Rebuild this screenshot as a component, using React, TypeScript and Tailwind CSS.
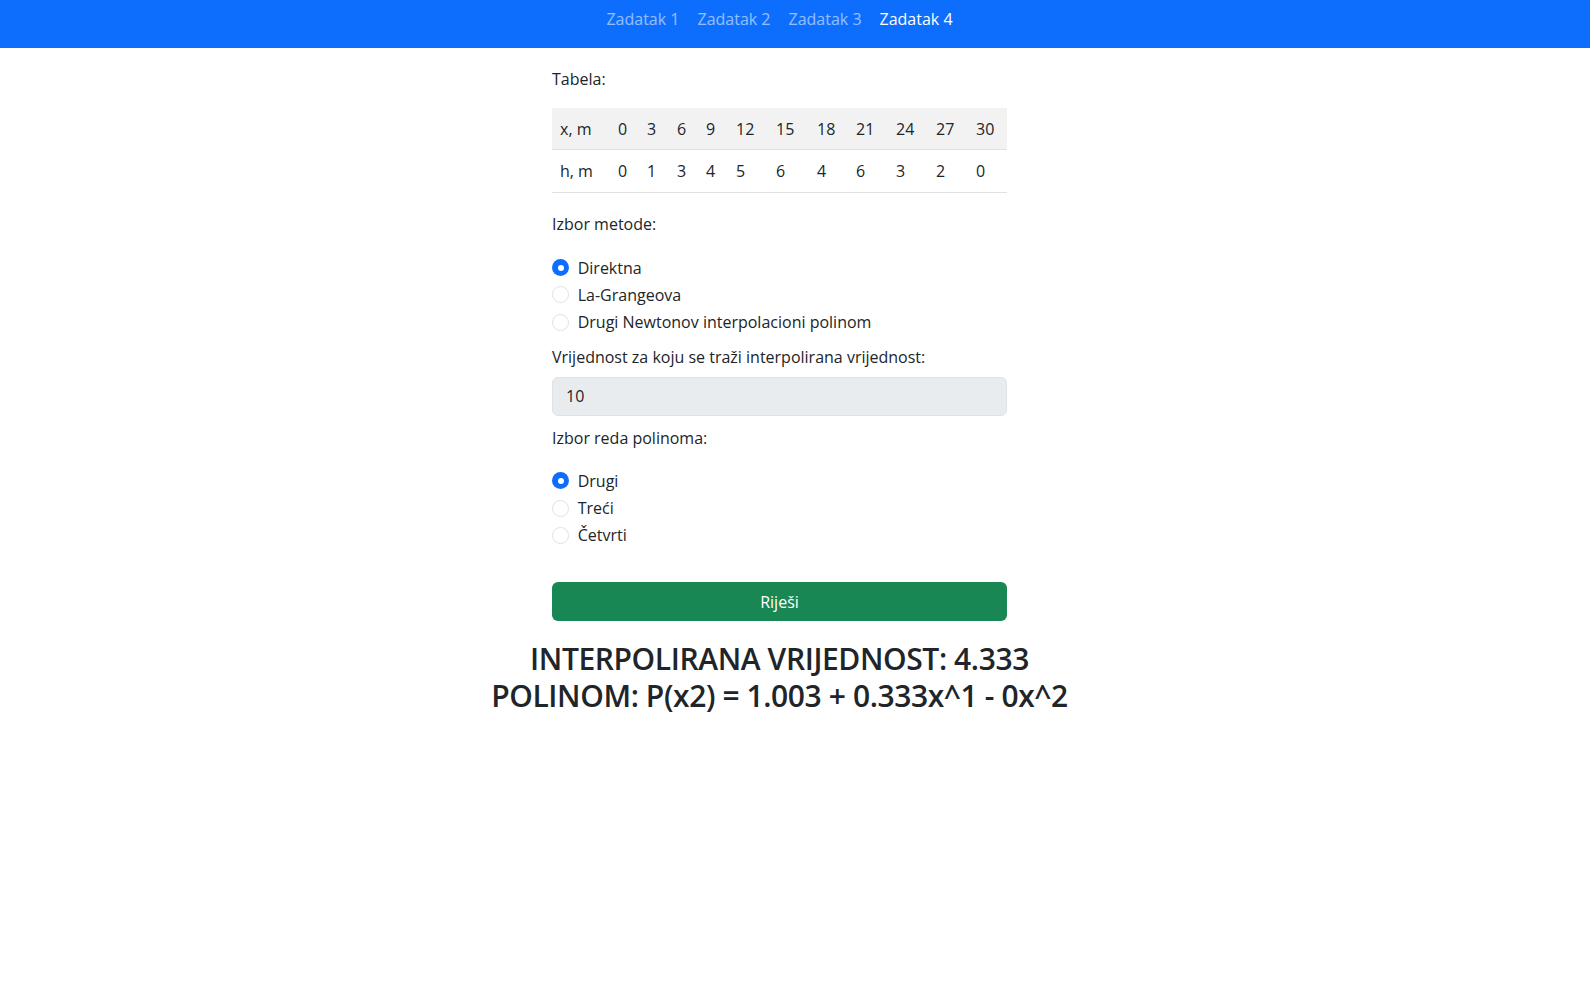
import { useState } from 'react';

const xs = ['0', '3', '6', '9', '12', '15', '18', '21', '24', '27', '30'];
const hs = ['0', '1', '3', '4', '5', '6', '4', '6', '3', '2', '0'];

const metode = ['Direktna', 'La-Grangeova', 'Drugi Newtonov interpolacioni polinom'];
const redovi = ['Drugi', 'Treći', 'Četvrti'];

// kolone tabele, sirine uzete sa slike
const gridCols = 'grid grid-cols-[58px_29px_30px_29px_30px_40px_41px_39px_40px_40px_40px_39px] items-center';

function Radio({ label, checked, onClick }: { label: string; checked: boolean; onClick: () => void }) {
  return (
    <div className="flex h-[27.3px] cursor-pointer items-center gap-[8.7px]" onClick={onClick}>
      {checked ? (
        <span className="flex h-[17px] w-[17px] items-center justify-center rounded-full bg-[#0d6efd]">
          <span className="h-[6px] w-[6px] rounded-full bg-white" />
        </span>
      ) : (
        <span className="h-[17px] w-[17px] rounded-full border border-[#dee2e6] bg-white" />
      )}
      <span>{label}</span>
    </div>
  );
}

export default function App() {
  const [metoda, setMetoda] = useState(0);
  const [red, setRed] = useState(0);

  return (
    <div className="min-h-screen bg-white text-[16px] leading-[24px] text-[#212529] [font-family:'Open_Sans',sans-serif]">
      <nav className="h-[48px] bg-[#0d6efd]">
        <div className="flex w-[1559px] justify-center gap-[18px] pt-[7px]">
          <a className="text-white/55">Zadatak 1</a>
          <a className="text-white/55">Zadatak 2</a>
          <a className="text-white/55">Zadatak 3</a>
          <a className="text-white">Zadatak 4</a>
        </div>
      </nav>

      <div className="w-[1559px]">
        <div className="mx-auto w-[455px]">
          <p className="mt-[19px]">Tabela:</p>

          <div className="mt-[17px]">
            <div className={`${gridCols} h-[42px] border-b border-[#dee2e6] bg-[#f2f2f2]`}>
              <span className="pl-[8px]">x, m</span>
              {xs.map((v, i) => (
                <span key={i} className="pl-[8px]">{v}</span>
              ))}
            </div>
            <div className={`${gridCols} h-[43px] border-b border-[#dee2e6]`}>
              <span className="pl-[8px]">h, m</span>
              {hs.map((v, i) => (
                <span key={i} className="pl-[8px]">{v}</span>
              ))}
            </div>
          </div>

          <p className="mt-[19px]">Izbor metode:</p>
          <div className="mt-[18px]">
            {metode.map((m, i) => (
              <Radio key={m} label={m} checked={metoda === i} onClick={() => setMetoda(i)} />
            ))}
          </div>

          <p className="mt-[8.7px]">Vrijednost za koju se traži interpolirana vrijednost:</p>
          <div className="mt-[8px] flex h-[39.3px] items-center rounded-[6px] border border-[#dee2e6] bg-[#e9ecef] px-[13px]">
            10
          </div>

          <p className="mt-[10.3px]">Izbor reda polinoma:</p>
          <div className="mt-[17px]">
            {redovi.map((r, i) => (
              <Radio key={r} label={r} checked={red === i} onClick={() => setRed(i)} />
            ))}
          </div>

          <button className="mt-[33px] flex h-[39.4px] w-full items-center justify-center rounded-[6px] bg-[#198754] text-white">
            Riješi
          </button>
        </div>

        <div className="mt-[19.5px] text-center text-[30px] leading-[36.7px] font-semibold tracking-[-0.4px]">
          <div>INTERPOLIRANA VRIJEDNOST: 4.333</div>
          <div>POLINOM: P(x2) = 1.003 + 0.333x^1 - 0x^2</div>
        </div>
      </div>
    </div>
  );
}
